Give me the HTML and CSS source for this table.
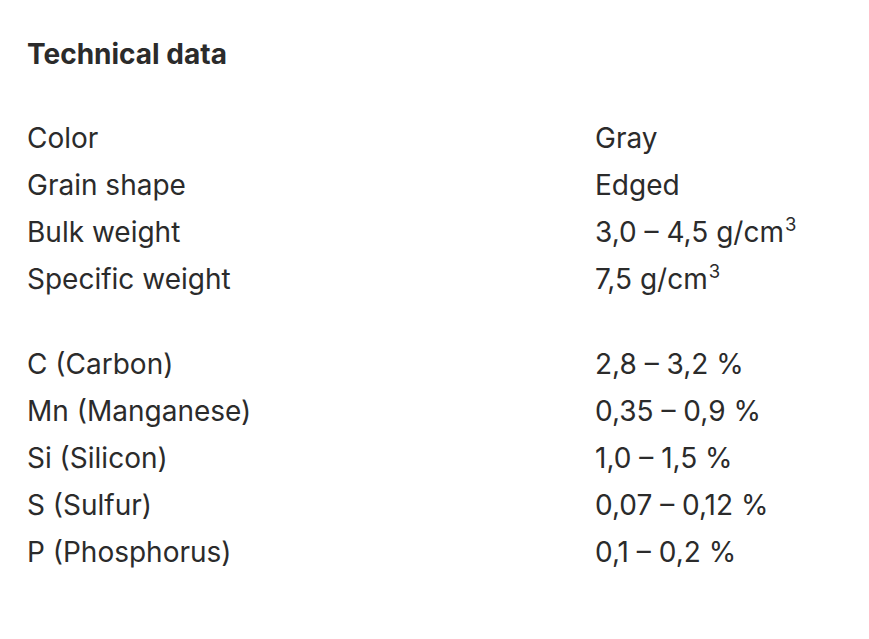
FILE: index.html
```html
<!DOCTYPE html>
<html lang="en">
<head>
<meta charset="utf-8">
<title>Technical data</title>
<link rel="stylesheet" href="styles.css">
</head>
<body>
<section class="tech">
  <h2 class="tech-title">Technical data</h2>
  <dl class="tech-list">
    <dt>Color</dt><dd>Gray</dd>
    <dt>Grain shape</dt><dd>Edged</dd>
    <dt>Bulk weight</dt><dd>3,0 – 4,5 g/cm<sup>3</sup></dd>
    <dt>Specific weight</dt><dd>7,5 g/cm<sup>3</sup></dd>
  </dl>
  <dl class="tech-list">
    <dt>C (Carbon)</dt><dd>2,8 – 3,2 %</dd>
    <dt>Mn (Manganese)</dt><dd>0,35 – 0,9 %</dd>
    <dt>Si (Silicon)</dt><dd>1,0 – 1,5 %</dd>
    <dt>S (Sulfur)</dt><dd>0,07 – 0,12 %</dd>
    <dt>P (Phosphorus)</dt><dd>0,1 – 0,2 %</dd>
  </dl>
</section>
</body>
</html>
```
FILE: styles.css
```css
html, body {
  margin: 0;
  padding: 0;
  background: #ffffff;
}
body {
  font-family: Inter, "Open Sans", "Liberation Sans", sans-serif;
  color: #2b2b2b;
}
.tech {
  padding: 36px 27px 0 27px;
}
.tech-title {
  margin: 0 0 43px 0;
  font-size: 28px;
  line-height: 36px;
  font-weight: 700;
}
.tech-list {
  display: grid;
  grid-template-columns: 568px 1fr;
  margin: 0 0 38px 0;
  font-size: 28px;
  line-height: 47px;
}
.tech-list dt, .tech-list dd {
  margin: 0;
}
.tech-list sup {
  font-size: 0.66em;
  line-height: 0;
  vertical-align: 0.6em;
  margin-left: 1px;
}
```
